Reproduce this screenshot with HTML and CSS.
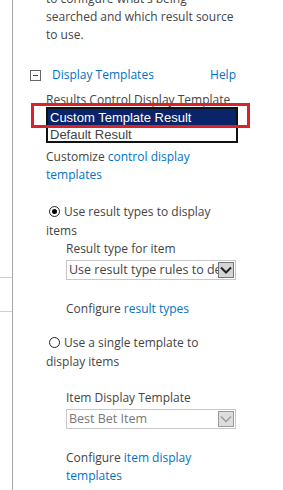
FILE: index.html
```html
<!DOCTYPE html>
<html lang="en">
<head>
<meta charset="UTF-8">
<title>Display Templates</title>
<link rel="stylesheet" href="styles.css">
</head>
<body>
  <div class="page">
    <div class="rail">
      <div class="rail-row rail-first"></div>
      <div class="rail-row"></div>
    </div>

    <div class="panel">
      <p class="intro">to configure what's being searched and which result source to use.</p>

      <div class="section-head">
        <span class="toggle"></span>
        <a class="section-title">Display Templates</a>
        <a class="help">Help</a>
      </div>

      <div class="field-label">Results Control Display Template</div>
      <div class="listbox-wrap">
        <div class="listbox">
          <div class="option selected">Custom Template Result</div>
          <div class="option">Default Result</div>
        </div>
        <div class="highlight"></div>
      </div>

      <p class="line">Customize <a>control display templates</a></p>

      <div class="radio-line"><span class="radio checked"></span>Use result types to display items</div>
      <div class="sub">
        <div class="field-label">Result type for item</div>
        <div class="dropdown">
          <span class="dropdown-text">Use result type rules to determine</span>
          <span class="arrow">
            <svg width="12" height="8" viewBox="0 0 12 8"><path d="M1 1.5 L6 6.5 L11 1.5" fill="none" stroke="#222" stroke-width="2"/></svg>
          </span>
        </div>
        <p class="line configure">Configure <a>result types</a></p>
      </div>

      <div class="radio-line second-radio"><span class="radio"></span>Use a single template to display items</div>
      <div class="sub">
        <div class="field-label second">Item Display Template</div>
        <div class="dropdown disabled">
          <span class="dropdown-text">Best Bet Item</span>
          <span class="arrow">
            <svg width="12" height="8" viewBox="0 0 12 8"><path d="M1 1.5 L6 6.5 L11 1.5" fill="none" stroke="#999" stroke-width="1.3"/></svg>
          </span>
        </div>
        <p class="line configure">Configure <a>item display templates</a></p>
      </div>
    </div>
  </div>
</body>
</html>
```

FILE: styles.css
```css
body {
  margin: 0;
  background: #fff;
  font-family: 'Open Sans', sans-serif;
  font-size: 12px;
  color: #444;
  overflow: hidden;
}

a {
  color: #0072c6;
  text-decoration: none;
}

.page {
  display: flex;
  height: 490px;
}

.rail {
  width: 12px;
  flex: none;
  border-right: 1px solid #a6a6a6;
}

.rail-row {
  height: 33px;
  border-bottom: 1px solid #d0d0d0;
}

.rail-first {
  height: 277px;
}

.panel {
  width: 192px;
  padding-left: 33px;
  line-height: 18px;
}

.intro {
  margin: -10px 0 0;
}

.section-head {
  display: flex;
  align-items: center;
  margin: 22px -38px 0 -16px;
  height: 18px;
}

.toggle {
  width: 9px;
  height: 9px;
  border: 1px solid #666;
  margin-right: 11px;
  position: relative;
}

.toggle::after {
  content: "";
  position: absolute;
  left: 2px;
  top: 4px;
  width: 5px;
  height: 1px;
  background: #444;
}

.section-title {
  flex: 1;
}

.help {
  margin-right: 40px;
}

.field-label {
  margin-top: 7px;
  white-space: nowrap;
}

.listbox-wrap {
  position: relative;
  width: 192px;
  margin-top: -2px;
}

.listbox {
  border: 2px solid #111;
  height: 32px;
  overflow: hidden;
  font-family: 'Liberation Sans', Arial, sans-serif;
  font-size: 13px;
  line-height: 17px;
}

.option {
  padding-left: 2px;
  color: #444;
}

.option.selected {
  background: #0a246a;
  color: #fff;
}

.highlight {
  position: absolute;
  left: -15px;
  top: -4px;
  width: 213px;
  height: 19px;
  border: 3px solid #d8232a;
}

.line {
  margin: 0;
}

.panel > .line {
  margin-top: 5px;
}

.radio-line {
  margin-top: 18px;
  text-indent: 3px;
  line-height: 19px;
}

.radio-line.second-radio {
  margin-top: 15px;
}

.radio {
  display: inline-block;
  width: 9px;
  height: 9px;
  border: 1px solid #222;
  border-radius: 50%;
  margin-right: 4px;
  vertical-align: -1px;
  position: relative;
}

.radio.checked::after {
  content: "";
  position: absolute;
  left: 2px;
  top: 2px;
  width: 5px;
  height: 5px;
  border-radius: 50%;
  background: #000;
}

.sub {
  padding-left: 20px;
}

.sub .field-label {
  margin-top: 0;
}

.sub .field-label.second {
  margin-top: 18px;
}

.dropdown {
  display: flex;
  width: 168px;
  height: 18px;
  border: 1px solid #c8c8c8;
  margin-top: 2px;
  font-size: 12.5px;
}

.dropdown-text {
  flex: 1;
  overflow: hidden;
  white-space: nowrap;
  padding-left: 2px;
  line-height: 18px;
  color: #444;
}

.arrow {
  width: 16px;
  height: 16px;
  margin: 1px 1px 0 0;
  background: #d4d4d4;
  border: 1px solid #777;
  box-sizing: border-box;
  display: flex;
  align-items: center;
  justify-content: center;
}

.dropdown.disabled .dropdown-text {
  color: #777;
}

.dropdown.disabled .arrow {
  background: #ddd;
  border-color: #999;
}

.configure {
  margin-top: 20px;
}
```
